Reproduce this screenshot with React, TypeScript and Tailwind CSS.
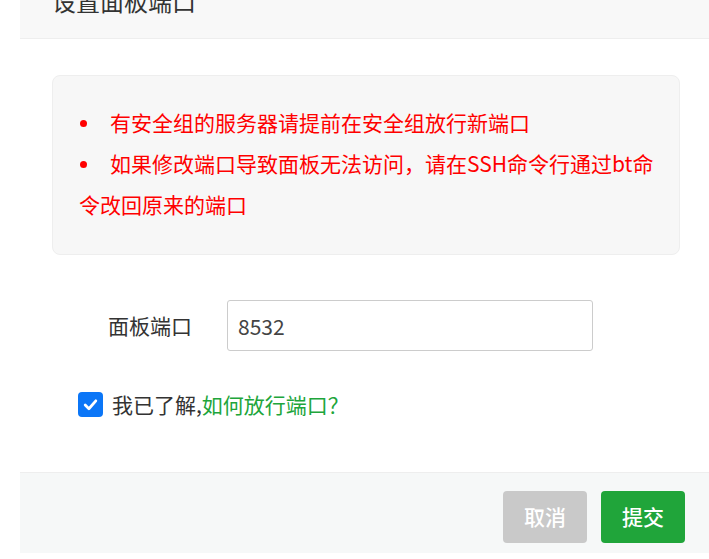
import { useState } from 'react';

const FONT = '[font-family:"Noto_Sans_CJK_SC","Noto_Sans",sans-serif]';

const NOTES = [
  '有安全组的服务器请提前在安全组放行新端口',
  '如果修改端口导致面板无法访问，请在SSH命令行通过bt命',
];

export default function App() {
  const [port, setPort] = useState('8532');
  const [agreed, setAgreed] = useState(true);

  return (
    <div className={`min-h-[559px] bg-white pl-[20px] ${FONT}`}>
      {/* 标题栏（被截掉一半） */}
      <div className="h-[39px] overflow-hidden border-b border-[#eeeeee] bg-[#f8f8f8] pl-[32px]">
        <div className="-mt-[11px] text-[24px] leading-[24px] text-[#333]">设置面板端口</div>
      </div>

      <div className="pt-[36px] pl-[32px] pr-[29px]">
        {/* 提示框 */}
        <div className="h-[180px] rounded-[8px] border border-[#eeeeee] bg-[#f7f7f7] pl-[26px] pr-[16px] pt-[26px]">
          <ul className="text-[21px] leading-[41px] text-[#ff0000]">
            {NOTES.map((note, i) => (
              <li key={i}>
                <span className="inline-block w-[31px] pl-[1px] align-middle">
                  <span className="-mt-[3px] block h-[7px] w-[7px] rounded-full bg-[#ff0000]" />
                </span>
                {note}
                {i === 1 && (
                  <>
                    <br />
                    令改回原来的端口
                  </>
                )}
              </li>
            ))}
          </ul>
        </div>

        {/* 面板端口 */}
        <div className="mt-[45px] flex items-center">
          <label className="w-[175px] pl-[56px] text-[21px] text-[#333]">面板端口</label>
          <input
            value={port}
            onChange={(e) => setPort(e.target.value)}
            className="h-[51px] w-[366px] rounded-[3px] border border-[#cccccc] bg-white pl-[10px] text-[21px] text-[#444] outline-none"
          />
        </div>

        {/* 确认 */}
        <div className="mt-[41px] flex items-center pl-[26px]">
          <button
            onClick={() => setAgreed(!agreed)}
            className={`flex h-[25px] w-[25px] items-center justify-center rounded-[4px] ${agreed ? 'bg-[#0b76f7]' : 'border-2 border-[#767676] bg-white'}`}
          >
            {agreed && (
              <svg width="17" height="17" viewBox="0 0 16 16" fill="none" stroke="white" strokeWidth="2.6" strokeLinecap="round" strokeLinejoin="round">
                <polyline points="3,8.5 6.5,12 13,4.5" />
              </svg>
            )}
          </button>
          <span className="ml-[9px] text-[21px] leading-[25px] text-[#333]">
            我已了解,<a className="text-[#20a53a] cursor-pointer">如何放行端口？</a>
          </span>
        </div>
      </div>

      {/* 底部按钮 */}
      <div className="mt-[55px] flex h-[81px] justify-end gap-[14px] border-t border-[#eeeeee] bg-[#f6f8f8] pr-[24px] pt-[18px]">
        <button className="h-[52px] w-[84px] rounded-[4px] bg-[#c9c9c9] text-[21px] font-medium text-white">取消</button>
        <button className="h-[52px] w-[84px] rounded-[4px] bg-[#20a53a] text-[21px] font-medium text-white">提交</button>
      </div>
    </div>
  );
}
